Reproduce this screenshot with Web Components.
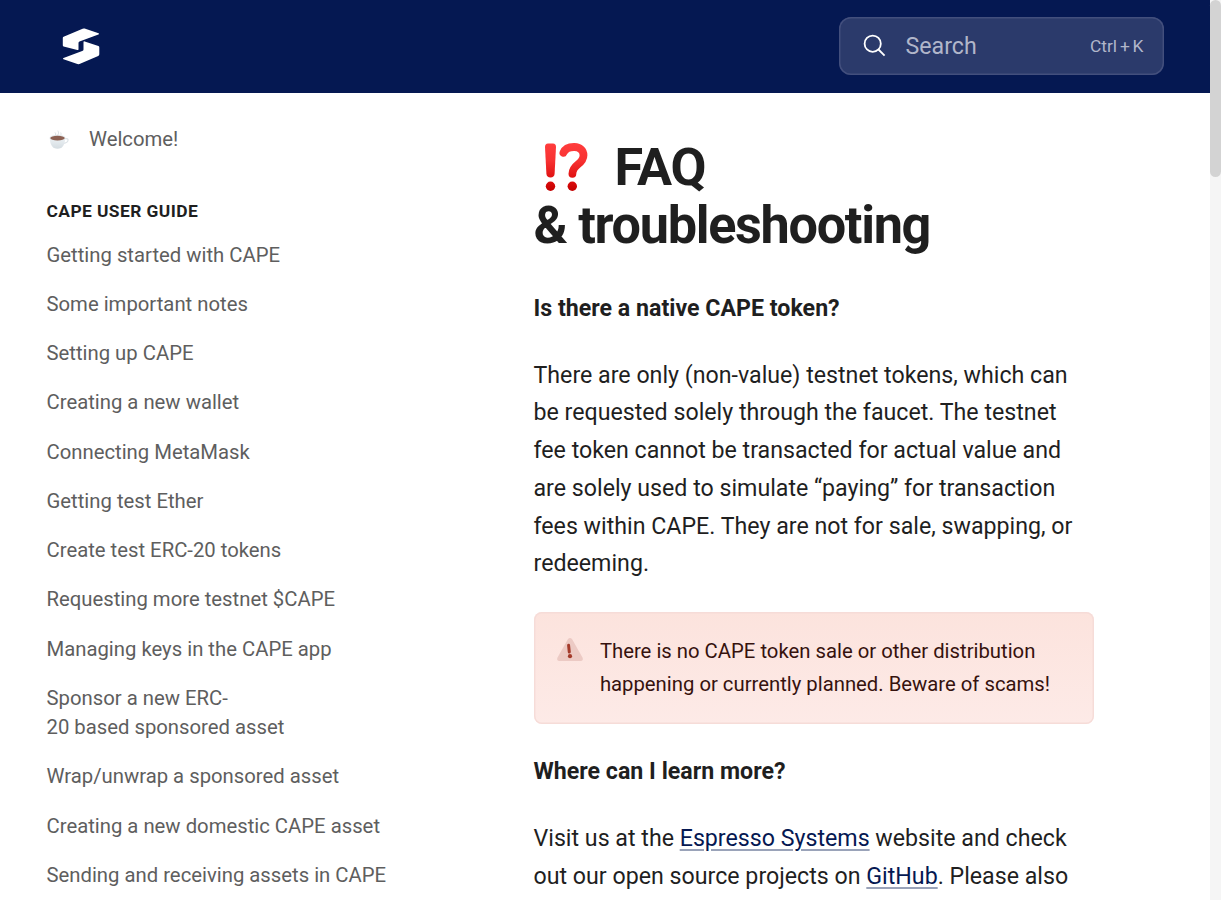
<!DOCTYPE html>
<html lang="en">
<head>
<meta charset="utf-8">
<title>FAQ &amp; troubleshooting</title>
<style>
html,body{margin:0;height:100%;overflow:hidden}
body{font-family:Roboto,"Liberation Sans",sans-serif;color:#1f1f1f;background:#fff}
</style>
</head>
<body>
<docs-app></docs-app>
<script>
const define = (name, html) => customElements.define(name, class extends HTMLElement {
  constructor() {
    super();
    const t = document.createElement('template');
    t.innerHTML = html;
    this.attachShadow({mode: 'open'}).append(t.content.cloneNode(true));
  }
});

define('brand-logo', `<style>:host{display:block;width:38px;height:38px}svg{display:block}</style>
<svg width="38" height="38" viewBox="0 0 38 38" fill="#fff"><path d="M.8 11Q.8 10.2 1.6 9.8L20.6 1.7Q21.6 1.3 22.6 1.5L36.6 6.2Q37.8 6.9 36.4 7.5L17.5 14.4Q16.5 14.8 16.5 15.9V22.2Q16.4 23.4 15.3 23L1.6 19.4Q.8 19 .8 18.2Z"/><path d="M21.5 15.3Q21.5 14 22.7 14.5L36.4 19.1Q37.3 19.5 37.3 20.4V27.2Q37.3 28.4 36.2 29L17.5 37Q16.5 37.3 15.4 37L1.5 32.3Q.2 31.6 1.5 30.9L20.2 24.1Q21.5 23.6 21.5 22.4Z"/></svg>`);

define('search-box', `<style>
:host{display:flex;align-items:center;box-sizing:border-box;width:325px;height:58px;padding:0 20.5px 0 23.5px;box-shadow:inset 0 0 0 1.45px #434f7d;border-radius:12px;background:#2b3a6b;color:#b1b6ca;font-size:23.2px}
svg{margin:-1px 19px 0 0;flex:none}.key{margin-left:auto;font-size:17.4px;word-spacing:-1.5px}
</style><svg width="24" height="24" viewBox="0 0 24 24" fill="none" stroke="#fff" stroke-width="1.8"><circle cx="9.7" cy="9.7" r="8.1"/><path d="M15.5 15.5L21.6 21.6"/></svg><span><slot></slot></span><span class="key">Ctrl + K</span>`);

define('site-header', `<style>
:host{display:flex;align-items:center;justify-content:space-between;box-sizing:border-box;height:93px;padding:0 46px 0 62px;background:#051852;flex:none}
search-box{margin-top:-1px}brand-logo{margin-top:-1.4px}
</style><brand-logo></brand-logo><search-box>Search</search-box>`);

define('nav-link', `<style>:host{display:block;padding:10.15px 0;font-size:20.3px;line-height:29px;color:#5e5e5e}</style><slot></slot>`);

define('cup-icon', `<style>:host{display:block;width:20px;height:20px}svg{display:block}</style>
<svg width="20" height="20" viewBox="0 0 20 20"><defs><linearGradient id="g" x2="0" y2="1"><stop stop-color="#edf2f5"/><stop offset="1" stop-color="#d4dce1"/></linearGradient></defs><path d="M16 8.7c4.4-1 4.2 3.7-1.6 4.7" fill="none" stroke="#dde3e7" stroke-width="1.2"/><path d="M.8 7.8c0 5.2 1.8 8.9 4.2 10.3q3.5 1.5 7 0c2.4-1.4 4.2-5.1 4.2-10.3z" fill="url(#g)"/><ellipse cx="8.5" cy="7.9" rx="8" ry="3.1" fill="#e4e9ec"/><ellipse cx="8.5" cy="8.1" rx="7.2" ry="2.4" fill="#8d6153"/><path d="M6.2 5.2q1.4-1-.2-2.8M8.8 5q1.7-1.7.1-4.4M11.6 5.2q1.1-1 .1-2.7" fill="none" stroke="#e0e5e8" stroke-width="1"/></svg>`);

define('side-nav', `<style>
:host{display:block;box-sizing:border-box;width:533.5px;padding:21.5px 0 0 46.5px;flex:none}
.welcome{display:flex;align-items:center;gap:20.5px}cup-icon{margin:2px 0 0 2px}
h2{margin:33.5px 0 4.1px;font-size:17.4px;line-height:29px;font-weight:700;letter-spacing:.42px;color:#1f1f1f}
</style>
<div class="welcome"><cup-icon></cup-icon><nav-link>Welcome!</nav-link></div>
<h2>CAPE USER GUIDE</h2>
<nav-link>Getting started with CAPE</nav-link>
<nav-link>Some important notes</nav-link>
<nav-link>Setting up CAPE</nav-link>
<nav-link>Creating a new wallet</nav-link>
<nav-link>Connecting MetaMask</nav-link>
<nav-link>Getting test Ether</nav-link>
<nav-link>Create test ERC-20 tokens</nav-link>
<nav-link>Requesting more testnet $CAPE</nav-link>
<nav-link>Managing keys in the CAPE app</nav-link>
<nav-link>Sponsor a new ERC-<br>20 based sponsored asset</nav-link>
<nav-link>Wrap/unwrap a sponsored asset</nav-link>
<nav-link>Creating a new domestic CAPE asset</nav-link>
<nav-link>Sending and receiving assets in CAPE</nav-link>`);

define('page-title', `<style>
:host{display:block}h1{margin:0;font-size:52.2px;line-height:58px;letter-spacing:-1.305px;font-weight:700}
.row{display:flex;align-items:center}svg{width:44px;height:50px;margin:-1px 26.6px 0 10.4px}
</style><h1><div class="row"><svg viewBox="0 0 44 50"><defs><linearGradient id="r" gradientUnits="userSpaceOnUse" x1="0" y1="1" x2="0" y2="36"><stop stop-color="#ff3d3d"/><stop offset=".5" stop-color="#f83232"/><stop offset="1" stop-color="#df1010"/></linearGradient><linearGradient id="d" x2="0" y2="1"><stop stop-color="#db0c0c"/><stop offset="1" stop-color="#c30000"/></linearGradient></defs><path d="M1 5Q1 1.5 4 1.4H9Q12 1.5 12 5L10.6 31.8Q10.2 35.6 6.5 35.6T2.4 31.8Z" fill="url(#r)"/><path d="M19.4 10.8C21.2 6.5 25.8 4.9 30.4 5C36 5.2 39.5 8.4 39.5 13.2C39.5 22.8 28.4 21.7 28.4 31.8" fill="none" stroke="url(#r)" stroke-width="7.8" stroke-linecap="round"/><circle cx="6.5" cy="44.3" r="4.7" fill="url(#d)"/><circle cx="28.3" cy="44.3" r="4.7" fill="url(#d)"/></svg><span>FAQ</span></div>&amp; troubleshooting</h1>`);

define('hint-block', `<style>
:host{display:flex;box-sizing:border-box;width:560.4px;height:112px;padding:23px 22.4px;box-shadow:inset 0 0 0 1.45px #f6dcd8;border-radius:8px;background:linear-gradient(#fce3dd,#fdeae7);font-size:20.3px;line-height:33px;color:#36120e}
svg{width:28px;height:26px;margin:2px 16px 0 0;flex:none}
</style><svg viewBox="0 0 28 26"><path d="M12 2.1Q14 .1 16 2.1L26.6 20.8Q27.6 23.9 24.8 24H3.2Q.4 23.9 1.4 20.8Z" fill="#eccac4"/><path d="M12.6 8.3L13.3 15" stroke="#a43b2b" stroke-width="3" stroke-linecap="round"/><circle cx="14" cy="19.2" r="2.1" fill="#a43b2b"/></svg><div><slot></slot></div>`);

define('doc-link', `<style>:host{color:#051852;text-decoration:underline;text-decoration-color:#9aa3b9;text-decoration-thickness:2px;text-underline-offset:3px}</style><slot></slot>`);

define('doc-article', `<style>
:host{display:block;width:562px;padding-top:45.7px;font-size:23.2px;line-height:37.7px}
h3{font-size:23.2px;line-height:37.7px;margin:0;font-weight:700}
p{margin:29px 0}page-title{margin-bottom:35.3px}hint-block{margin-bottom:29.2px}hint-block + h3 + p{margin-top:29.3px}
</style>
<page-title></page-title>
<h3>Is there a native CAPE token?</h3>
<p>There are only (non-value) testnet tokens, which can<br>be requested solely through the faucet. The testnet<br>fee token cannot be transacted for actual value and<br>are solely used to simulate “paying” for transaction<br>fees within CAPE. They are not for sale, swapping, or<br>redeeming.</p>
<hint-block>There is no CAPE token sale or other distribution<br>happening or currently planned. Beware of scams!</hint-block>
<h3>Where can I learn more?</h3>
<p>Visit us at the <doc-link>Espresso Systems</doc-link> website and check<br>out our open source projects on <doc-link>GitHub</doc-link>. Please also</p>`);

define('scroll-bar', `<style>:host{display:block;width:11px;background:#f5f5f5;flex:none}div{height:177px;border-radius:5.5px;background:#d3d3d3}</style><div></div>`);

define('docs-app', `<style>
:host{display:flex;height:900px;width:1221px;overflow:hidden}
.page{display:flex;flex-direction:column;width:1210px;height:900px}
.body{display:flex;min-height:0;overflow:hidden}
</style><div class="page"><site-header></site-header><div class="body"><side-nav></side-nav><doc-article></doc-article></div></div><scroll-bar></scroll-bar>`);
</script>
</body>
</html>
